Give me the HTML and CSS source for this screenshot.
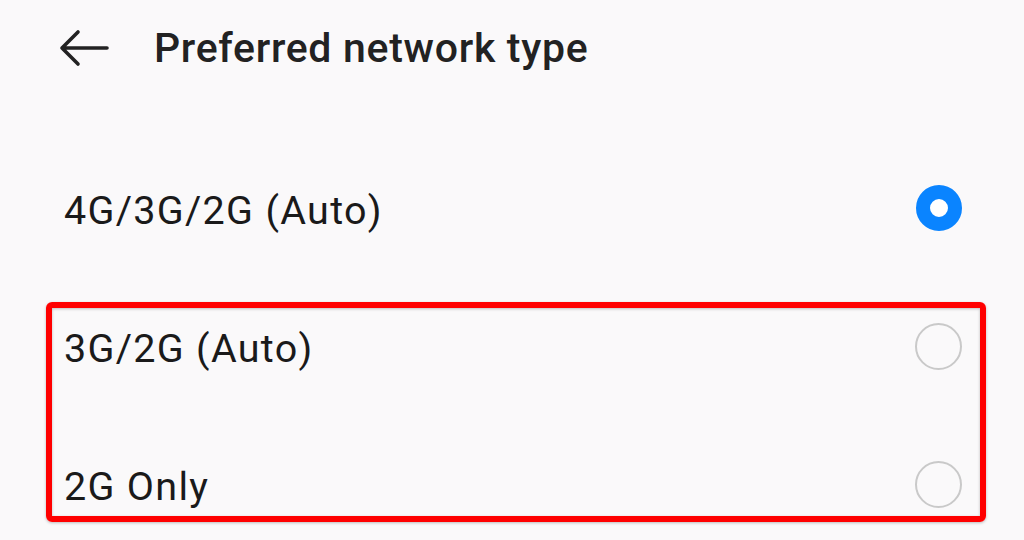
FILE: index.html
```html
<!DOCTYPE html>
<html>
<head>
<meta charset="utf-8">
<link rel="stylesheet" href="styles.css">
</head>
<body>
<div class="screen">
  <header class="topbar">
    <svg class="back" width="50" height="38" viewBox="0 0 50 38" aria-hidden="true">
      <path d="M48 19H3M19 3L3 19L19 35" fill="none" stroke="#222" stroke-width="3.6" stroke-linecap="round" stroke-linejoin="round"/>
    </svg>
    <h1 class="title">Preferred network type</h1>
  </header>
  <div class="list">
    <div class="row"><span class="label">4G/3G/2G (Auto)</span><span class="radio checked"></span></div>
    <div class="row"><span class="label">3G/2G (Auto)</span><span class="radio"></span></div>
    <div class="row"><span class="label">2G Only</span><span class="radio"></span></div>
    <div class="highlight"></div>
  </div>
</div>
</body>
</html>
```

FILE: styles.css
```css
html, body {
  margin: 0;
  padding: 0;
  background: #faf9fa;
}
.screen {
  width: 1024px;
  height: 540px;
  overflow: hidden;
  font-family: Roboto, "Noto Sans", sans-serif;
  color: #1d1d1d;
}
.topbar {
  height: 95px;
  display: flex;
  align-items: center;
  padding-left: 59px;
  gap: 45px;
}
.back {
  display: block;
  flex: none;
}
.title {
  margin: 0;
  font-size: 41px;
  font-weight: 500;
  color: #222;
  letter-spacing: 0.7px;
}
.list {
  position: relative;
  padding-top: 44px;
}
.row {
  height: 138px;
  display: flex;
  align-items: center;
  justify-content: space-between;
  padding: 0 62px 0 64px;
}
.label {
  font-size: 39.5px;
  font-weight: 400;
  color: #1a1a1a;
  letter-spacing: 1.3px;
  padding-top: 4px;
}
.radio {
  width: 43px;
  height: 43px;
  border-radius: 50%;
  border: 2px solid #c9c9c9;
  box-sizing: content-box;
  flex: none;
}
.radio.checked {
  width: 18px;
  height: 18px;
  border: 14.5px solid #0a84ff;
  background: #ffffff;
}
.highlight {
  position: absolute;
  left: 46px;
  top: 207px;
  width: 940px;
  height: 220px;
  box-sizing: border-box;
  border: 6px solid #ff0000;
  border-radius: 6px;
  box-shadow: 0 1px 3px rgba(0,0,0,0.25), inset 0 1px 3px rgba(0,0,0,0.25);
}
```
